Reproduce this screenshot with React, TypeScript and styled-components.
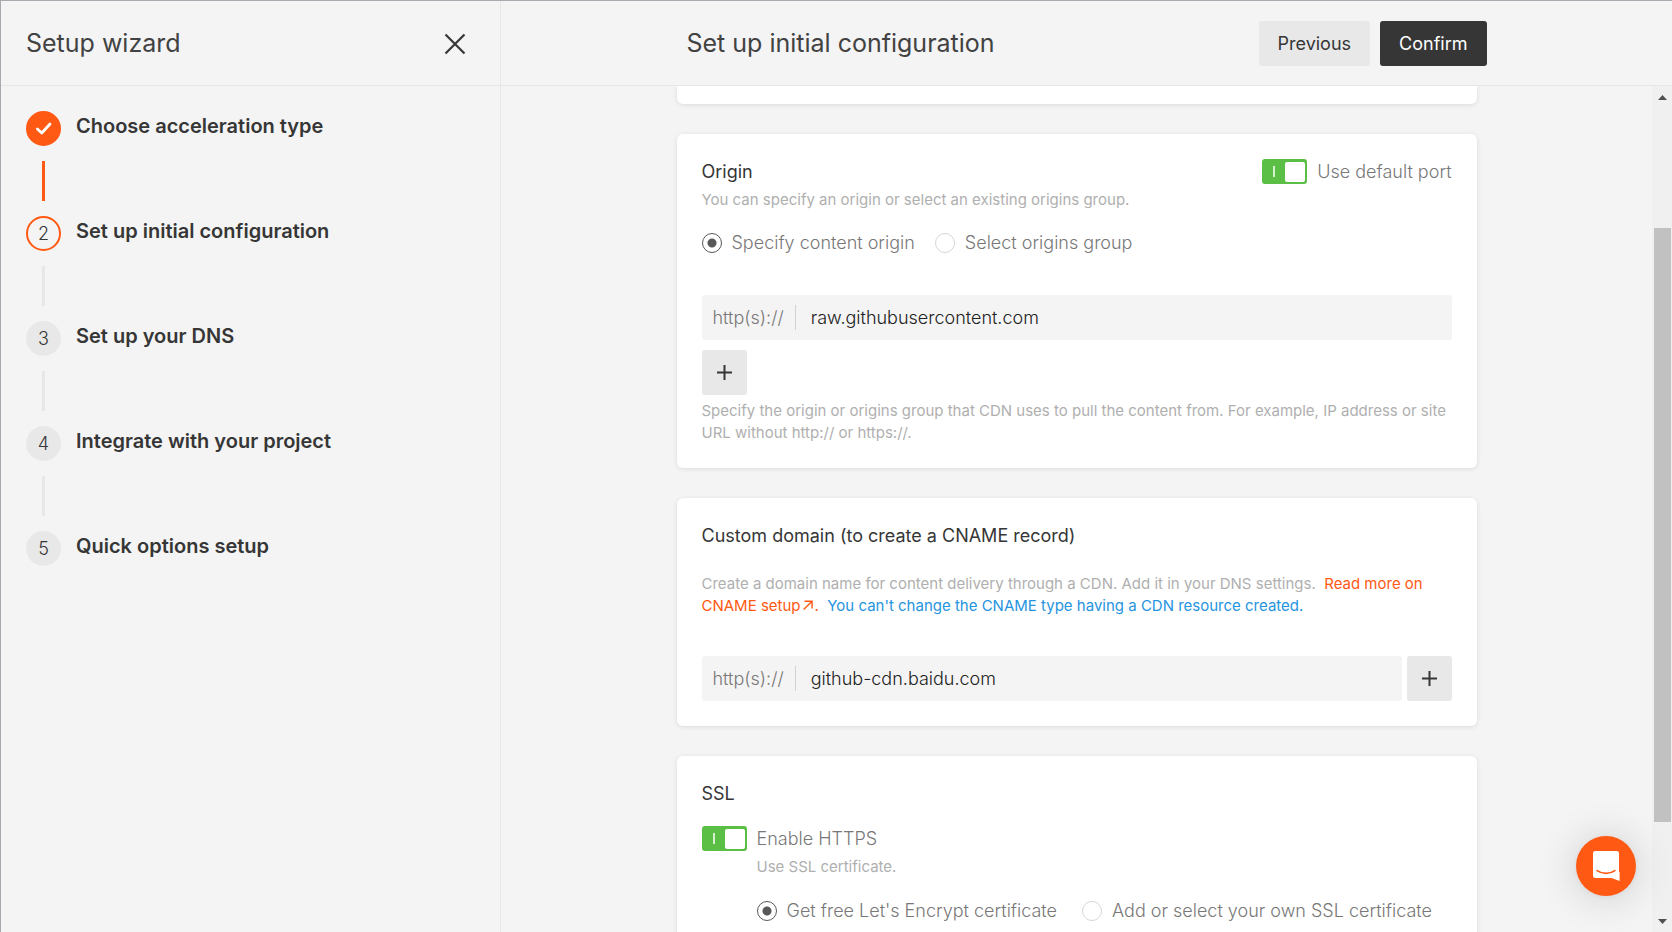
import React, { useState } from "react";
import styled, { createGlobalStyle } from "styled-components";

const c = {
  page: "#f4f4f4",
  line: "#e7e7e7",
  button: "#e8e8e8",
  ink: "#363636",
  text: "#787878",
  muted: "#afafaf",
  accent: "#ff5913",
  green: "#5bbf46",
  blue: "#2694de",
};

const GlobalStyle = createGlobalStyle`
  *, *::before, *::after { box-sizing: border-box; }
  body {
    margin: 0;
    background: ${c.page};
    color: ${c.ink};
    font: 400 18px/25px Inter, "Liberation Sans", sans-serif;
  }
  h1, h2, h3, p, ol { margin: 0; padding: 0; font-weight: 400; }
  button, input { font: inherit; color: inherit; border: 0; margin: 0; padding: 0; }
  button { cursor: pointer; }
  a { color: inherit; text-decoration: none; }
`;

const Shell = styled.div`
  display: flex;
  height: 100vh;
  border-top: 1px solid #a9a8ae;
  border-left: 1px solid #a9a8ae;
`;

const Sidebar = styled.aside`
  flex: 0 0 500px;
  border-right: 1px solid ${c.line};
`;

const Bar = styled.header`
  display: flex;
  justify-content: center;
  flex: none;
  border-bottom: 1px solid ${c.line};
`;

const BarInner = styled.div<{ $wide?: boolean }>`
  display: flex;
  align-items: center;
  gap: 10px;
  width: 100%;
  max-width: ${(p) => (p.$wide ? "none" : "800px")};
  height: 84px;
  padding: ${(p) => (p.$wide ? "0 34px 0 25px" : "0")};
`;

const Title = styled.h1`
  flex: 1;
  font-size: 25px;
  font-weight: 400;
  line-height: 30px;
  color: #424242;
`;

const IconButton = styled.button`
  display: flex;
  padding-top: 2px;
  background: none;
`;

const Steps = styled.ol`
  list-style: none;
  padding: 25px;
`;

const Step = styled.li`
  display: flex;
  gap: 15px;
  font-size: 20px;
  line-height: 30px;
  font-weight: 600;
`;

const StepTrack = styled.div`
  display: flex;
  flex-direction: column;
  align-items: center;
`;

type StepState = "done" | "current" | "todo";

const StepMark = styled.span<{ $state: StepState }>`
  display: grid;
  place-items: center;
  width: 35px;
  height: 35px;
  border-radius: 50%;
  border: 2px solid ${(p) => (p.$state === "todo" ? c.button : c.accent)};
  background: ${(p) =>
    p.$state === "done" ? c.accent : p.$state === "todo" ? c.button : "transparent"};
  font-size: 18px;
  font-weight: 300;
`;

const Connector = styled.span<{ $done: boolean }>`
  width: 3px;
  height: 40px;
  margin: 15px 0;
  background: ${(p) => (p.$done ? c.accent : c.line)};
`;

const Main = styled.main`
  flex: 1;
  min-width: 0;
  display: flex;
  flex-direction: column;
`;

const Action = styled.button<{ $primary?: boolean }>`
  height: 45px;
  padding: 0 19px;
  border-radius: 3px;
  background: ${(p) => (p.$primary ? "#363636" : c.button)};
  color: ${(p) => (p.$primary ? "#fff" : c.ink)};
`;

const Viewport = styled.div`
  flex: 1;
  min-height: 0;
  display: flex;
`;

const Scroll = styled.div`
  flex: 1;
  min-width: 0;
  overflow-y: auto;
  scrollbar-width: none;
`;

const Cards = styled.div`
  display: flex;
  flex-direction: column;
  gap: 30px;
  max-width: 800px;
  margin: 0 auto;
`;

const Card = styled.section<{ $bottom?: number }>`
  padding: 25px 25px ${(p) => p.$bottom ?? 25}px;
  border-radius: 6px;
  background: #fff;
  box-shadow: 0 1px 5px rgba(0, 0, 0, 0.1);
`;

const CardTail = styled(Card)`
  padding: 9px;
  border-radius: 0 0 6px 6px;
`;

const CardHead = styled.div`
  display: flex;
  justify-content: space-between;
`;

const CardTitle = styled.h2`
  font-size: 18px;
  line-height: 25px;
`;

const Hint = styled.p<{ $top?: number }>`
  margin-top: ${(p) => p.$top ?? 5}px;
  font-size: 15px;
  line-height: 22px;
  color: ${c.muted};
`;

const Options = styled.div<{ $gap: number; $top: number }>`
  display: flex;
  gap: ${(p) => p.$gap}px;
  margin-top: ${(p) => p.$top}px;
`;

const Choice = styled.label`
  display: flex;
  align-items: center;
  gap: 10px;
  font-weight: 300;
  color: ${c.text};
`;

const RadioInput = styled.input`
  appearance: none;
  width: 20px;
  height: 20px;
  border: 1px solid #d6d6d6;
  border-radius: 50%;
  background: #fff;

  &:checked {
    border-color: #585858;
    background: radial-gradient(circle, #585858 4px, #fff 5px);
  }
`;

const ToggleInput = styled.input`
  appearance: none;
  display: flex;
  align-items: center;
  justify-content: space-between;
  width: 45px;
  height: 25px;
  padding: 0 2px 0 11px;
  border-radius: 3px;
  background: #bdbdbd;

  &:checked { background: ${c.green}; }
  &::before {
    content: "";
    width: 2px;
    height: 11px;
    background: #d6efd0;
  }
  &::after {
    content: "";
    width: 20px;
    height: 20px;
    border-radius: 2px;
    background: #fff;
  }
  &:not(:checked) { flex-direction: row-reverse; }
`;

const FieldRow = styled.div<{ $top: number }>`
  display: flex;
  gap: 5px;
  margin-top: ${(p) => p.$top}px;
`;

const Field = styled.label`
  flex: 1;
  display: flex;
  align-items: center;
  height: 45px;
  padding-left: 11px;
  border-radius: 3px;
  background: ${c.page};
  font-weight: 300;
  color: ${c.text};
`;

const FieldInput = styled.input`
  flex: 1;
  min-width: 0;
  height: 25px;
  margin-left: 11px;
  padding-left: 15px;
  border-left: 1px solid #d2d2d2;
  background: transparent;
  color: #222;
  outline: none;
`;

const AddButton = styled.button<{ $top?: number }>`
  display: grid;
  place-items: center;
  width: 45px;
  height: 45px;
  margin-top: ${(p) => p.$top ?? 0}px;
  border-radius: 3px;
  background: ${c.button};
`;

const DocLink = styled.a`
  color: ${c.accent};
`;

const Notice = styled.span`
  color: ${c.blue};
`;

const Indented = styled.div`
  padding-left: 55px;
`;

const ToggleLine = styled.div`
  display: flex;
  margin-top: 20px;
`;

const ScrollBar = styled.div`
  flex: none;
  display: flex;
  flex-direction: column;
  width: 20px;
  padding: 0 1px 0 2px;
  background: #f0f0f0;
`;

const ScrollArrow = styled.span`
  display: grid;
  place-items: center;
  height: 22px;
`;

const ScrollPart = styled.span<{ $grow: number; $thumb?: boolean }>`
  flex: ${(p) => p.$grow} 0 0;
  background: ${(p) => (p.$thumb ? "#c1c1c1" : "transparent")};
`;

const ChatButton = styled.button`
  position: fixed;
  right: 36px;
  bottom: 36px;
  display: grid;
  place-items: center;
  width: 60px;
  height: 60px;
  border-radius: 50%;
  background: ${c.accent};
  box-shadow: 0 1px 6px rgba(0, 0, 0, 0.06), 0 2px 40px rgba(0, 0, 0, 0.16);
`;

const CloseIcon = () => (
  <svg width="22" height="22" viewBox="0 0 22 22" fill="none" stroke={c.ink} strokeWidth="2.2">
    <path d="M1.5 1.5 20.5 20.5M20.5 1.5 1.5 20.5" />
  </svg>
);

const CheckIcon = () => (
  <svg width="17" height="15" viewBox="0 0 17 15" fill="none" stroke="#fff" strokeWidth="2.8" strokeLinecap="round" strokeLinejoin="round">
    <path d="M2.4 8 6.8 12 15 3" />
  </svg>
);

const PlusIcon = () => (
  <svg width="15" height="15" viewBox="0 0 15 15" fill="none" stroke={c.ink} strokeWidth="2">
    <path d="M7.5 0V15M0 7.5H15" />
  </svg>
);

const ArrowIcon = () => (
  <svg width="14" height="11" viewBox="0 0 14 11" fill="none" stroke="currentColor" strokeWidth="1.4">
    <path d="M3.5 1.2H11.1V8.4M11.1 1.2 2.6 9.6" />
  </svg>
);

const ChatIcon = () => (
  <svg width="28" height="30" viewBox="0 0 28 30">
    <path d="M3.2 0H24.8A2.2 2.2 0 0 1 27 2.2V21H27.6V30L19.5 27H3.2A2.2 2.2 0 0 1 1 24.8V2.2A2.2 2.2 0 0 1 3.2 0Z" fill="#fff" />
    <path d="M5.2 19.6C10 23.2 18 23.2 22.8 19.6" fill="none" stroke={c.accent} strokeWidth="1.8" strokeLinecap="round" />
  </svg>
);

const steps: { label: string; state: StepState }[] = [
  { label: "Choose acceleration type", state: "done" },
  { label: "Set up initial configuration", state: "current" },
  { label: "Set up your DNS", state: "todo" },
  { label: "Integrate with your project", state: "todo" },
  { label: "Quick options setup", state: "todo" },
];

function Radio(props: { name: string; label: string; checked?: boolean }) {
  return (
    <Choice>
      <RadioInput type="radio" name={props.name} defaultChecked={props.checked} />
      {props.label}
    </Choice>
  );
}

function Toggle({ label }: { label: string }) {
  return (
    <Choice>
      <ToggleInput type="checkbox" role="switch" defaultChecked />
      {label}
    </Choice>
  );
}

function UrlField({ initial }: { initial: string }) {
  const [value, setValue] = useState(initial);
  return (
    <Field>
      http(s)://
      <FieldInput type="text" value={value} onChange={(e) => setValue(e.target.value)} />
    </Field>
  );
}

export default function App() {
  return (
    <>
      <GlobalStyle />
      <Shell>
        <Sidebar>
          <Bar>
            <BarInner $wide>
              <Title as="h2">Setup wizard</Title>
              <IconButton type="button" aria-label="Close">
                <CloseIcon />
              </IconButton>
            </BarInner>
          </Bar>
          <Steps>
            {steps.map((step, i) => (
              <Step key={step.label}>
                <StepTrack>
                  <StepMark $state={step.state}>
                    {step.state === "done" ? <CheckIcon /> : i + 1}
                  </StepMark>
                  {i < steps.length - 1 && <Connector $done={step.state === "done"} />}
                </StepTrack>
                {step.label}
              </Step>
            ))}
          </Steps>
        </Sidebar>
        <Main>
          <Bar>
            <BarInner>
              <Title>Set up initial configuration</Title>
              <Action type="button">Previous</Action>
              <Action type="button" $primary>Confirm</Action>
            </BarInner>
          </Bar>
          <Viewport>
            <Scroll>
              <Cards>
                <CardTail />
                <Card $bottom={24}>
                  <CardHead>
                    <CardTitle>Origin</CardTitle>
                    <Toggle label="Use default port" />
                  </CardHead>
                  <Hint>You can specify an origin or select an existing origins group.</Hint>
                  <Options $gap={20} $top={19}>
                    <Radio name="origin" label="Specify content origin" checked />
                    <Radio name="origin" label="Select origins group" />
                  </Options>
                  <FieldRow $top={40}>
                    <UrlField initial="raw.githubusercontent.com" />
                  </FieldRow>
                  <AddButton type="button" aria-label="Add origin" $top={10}>
                    <PlusIcon />
                  </AddButton>
                  <Hint>
                    Specify the origin or origins group that CDN uses to pull the content from. For
                    example, IP address or site URL without http:// or https://.
                  </Hint>
                </Card>
                <Card>
                  <CardTitle>Custom domain (to create a CNAME record)</CardTitle>
                  <Hint $top={25}>
                    Create a domain name for content delivery through a CDN. Add it in your DNS
                    settings.&nbsp;{" "}
                    <DocLink href="#cname">
                      Read more on CNAME setup
                      <ArrowIcon />.
                    </DocLink>
                    &nbsp;{" "}
                    <Notice>You can't change the CNAME type having a CDN resource created.</Notice>
                  </Hint>
                  <FieldRow $top={39}>
                    <UrlField initial="github-cdn.baidu.com" />
                    <AddButton type="button" aria-label="Add domain">
                      <PlusIcon />
                    </AddButton>
                  </FieldRow>
                </Card>
                <Card>
                  <CardTitle>SSL</CardTitle>
                  <ToggleLine>
                    <Toggle label="Enable HTTPS" />
                  </ToggleLine>
                  <Indented>
                    <Hint>Use SSL certificate.</Hint>
                    <Options $gap={25} $top={20}>
                      <Radio name="ssl" label="Get free Let's Encrypt certificate" checked />
                      <Radio name="ssl" label="Add or select your own SSL certificate" />
                    </Options>
                  </Indented>
                </Card>
              </Cards>
            </Scroll>
            <ScrollBar aria-hidden="true">
              <ScrollArrow>
                <svg width="9" height="5" viewBox="0 0 9 5"><path d="M0 5 4.5 0 9 5Z" fill="#505050" /></svg>
              </ScrollArrow>
              <ScrollPart $grow={120} />
              <ScrollPart $grow={594} $thumb />
              <ScrollPart $grow={88} />
              <ScrollArrow>
                <svg width="9" height="5" viewBox="0 0 9 5"><path d="M0 0 4.5 5 9 0Z" fill="#505050" /></svg>
              </ScrollArrow>
            </ScrollBar>
          </Viewport>
        </Main>
      </Shell>
      <ChatButton type="button" aria-label="Open chat">
        <ChatIcon />
      </ChatButton>
    </>
  );
}
